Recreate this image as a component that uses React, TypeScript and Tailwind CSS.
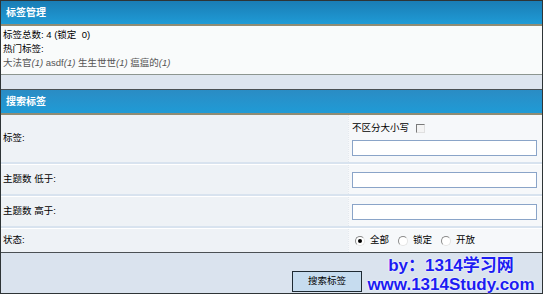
import React from 'react';

const font = { fontFamily: '"Liberation Sans", "Noto Sans CJK SC", sans-serif' };

function Radio({ checked }: { checked?: boolean }) {
  return (
    <span className="inline-flex items-center justify-center w-[10px] h-[10px] rounded-full border border-t-[#8a8a8a] border-l-[#8a8a8a] border-r-[#e4e4e4] border-b-[#e4e4e4] bg-white">
      {checked && <span className="w-[4px] h-[4px] rounded-full bg-black" />}
    </span>
  );
}

function Sep() {
  return (
    <div className="h-[3px] flex flex-col">
      <div className="h-[2px] bg-[#d8e3ef]" />
      <div className="h-px bg-white" />
    </div>
  );
}

function Row({ label, h, children }: { label: string; h: string; children: React.ReactNode }) {
  return (
    <div className={`flex ${h}`}>
      <div className="w-[347px] bg-[#eef2f6] flex items-center pl-[2px] text-[9.5px] text-black">{label}</div>
      <div className="flex-1 bg-[#f6f8fa] border-l border-dotted border-[#e3e8ee] flex flex-col justify-center pl-[3px]">
        {children}
      </div>
    </div>
  );
}

function TextBox() {
  return <div className="w-[185px] h-[16px] border border-[#8aa4c8] bg-white" />;
}

export default function App() {
  return (
    <div className="w-[543px] h-[294px] relative overflow-hidden bg-white" style={font}>
      <div className="h-full border border-[#2e3436] flex flex-col">
        <div className="h-[23px] bg-gradient-to-b from-[#1a7db5] to-[#1f9bd6] flex items-center pl-[5px] text-white text-[10px] font-bold">
          标签管理
        </div>
        <div className="h-[2px] bg-[#8f8c74]" />
        <div className="h-[48px] bg-[#f9fbfb] pt-[2px] pl-[2px] text-[9.5px] leading-[14px] text-black">
          <div>标签总数: 4 (锁定&nbsp; 0)</div>
          <div>热门标签:</div>
          <div className="text-[#555]">
            大法官<i>(1)</i> asdf<i>(1)</i> 生生世世<i>(1)</i> 瘟瘟的<i>(1)</i>
          </div>
        </div>
        <div className="h-px bg-[#8d9690]" />
        <div className="h-[14px] bg-[#dde5ef]" />
        <div className="h-px bg-[#4a5054]" />
        <div className="h-[23px] bg-gradient-to-b from-[#2a8cc4] to-[#1f9bd6] flex items-center pl-[5px] text-white text-[10px] font-bold">
          搜索标签
        </div>
        <div className="h-[2px] bg-[#8f8c74]" />
        <Row label="标签:" h="h-[47px]">
          <div className="flex items-center gap-[7px] text-[9.5px] mb-[4px]">
            <span>不区分大小写</span>
            <span className="w-[9px] h-[9px] border border-t-[#7a7a7a] border-l-[#7a7a7a] border-r-[#e0e0e0] border-b-[#e0e0e0] bg-[#f4f4f4]" />
          </div>
          <TextBox />
        </Row>
        <Sep />
        <Row label="主题数  低于:" h="h-[29px]">
          <TextBox />
        </Row>
        <Sep />
        <Row label="主题数  高于:" h="h-[29px]">
          <TextBox />
        </Row>
        <Sep />
        <Row label="状态:" h="h-[23px]">
          <div className="flex items-center text-[9.5px] pl-[3px]">
            <Radio checked />
            <span className="ml-[5px] mr-[9px]">全部</span>
            <Radio />
            <span className="ml-[5px] mr-[9px]">锁定</span>
            <Radio />
            <span className="ml-[5px]">开放</span>
          </div>
        </Row>
        <div className="h-px bg-[#4a5054]" />
        <div className="flex-1 bg-[#dae3ee] flex items-end justify-start pl-[291px] pb-[1px]">
          <button className="w-[70px] h-[21px] bg-[#c6dcef] border border-[#1e2a33] text-[9.5px] text-black">
            搜索标签
          </button>
        </div>
      </div>
      <div className="absolute left-[362px] top-[256px] w-[178px] flex flex-col items-center font-bold text-[#1c1cf2] leading-[19px] [text-shadow:0_0_2px_#fff,0_0_1px_#fff]">
        <div className="text-[17px] whitespace-nowrap">by：1314学习网</div>
        <div className="text-[17px] whitespace-nowrap">www.1314Study.com</div>
      </div>
    </div>
  );
}
